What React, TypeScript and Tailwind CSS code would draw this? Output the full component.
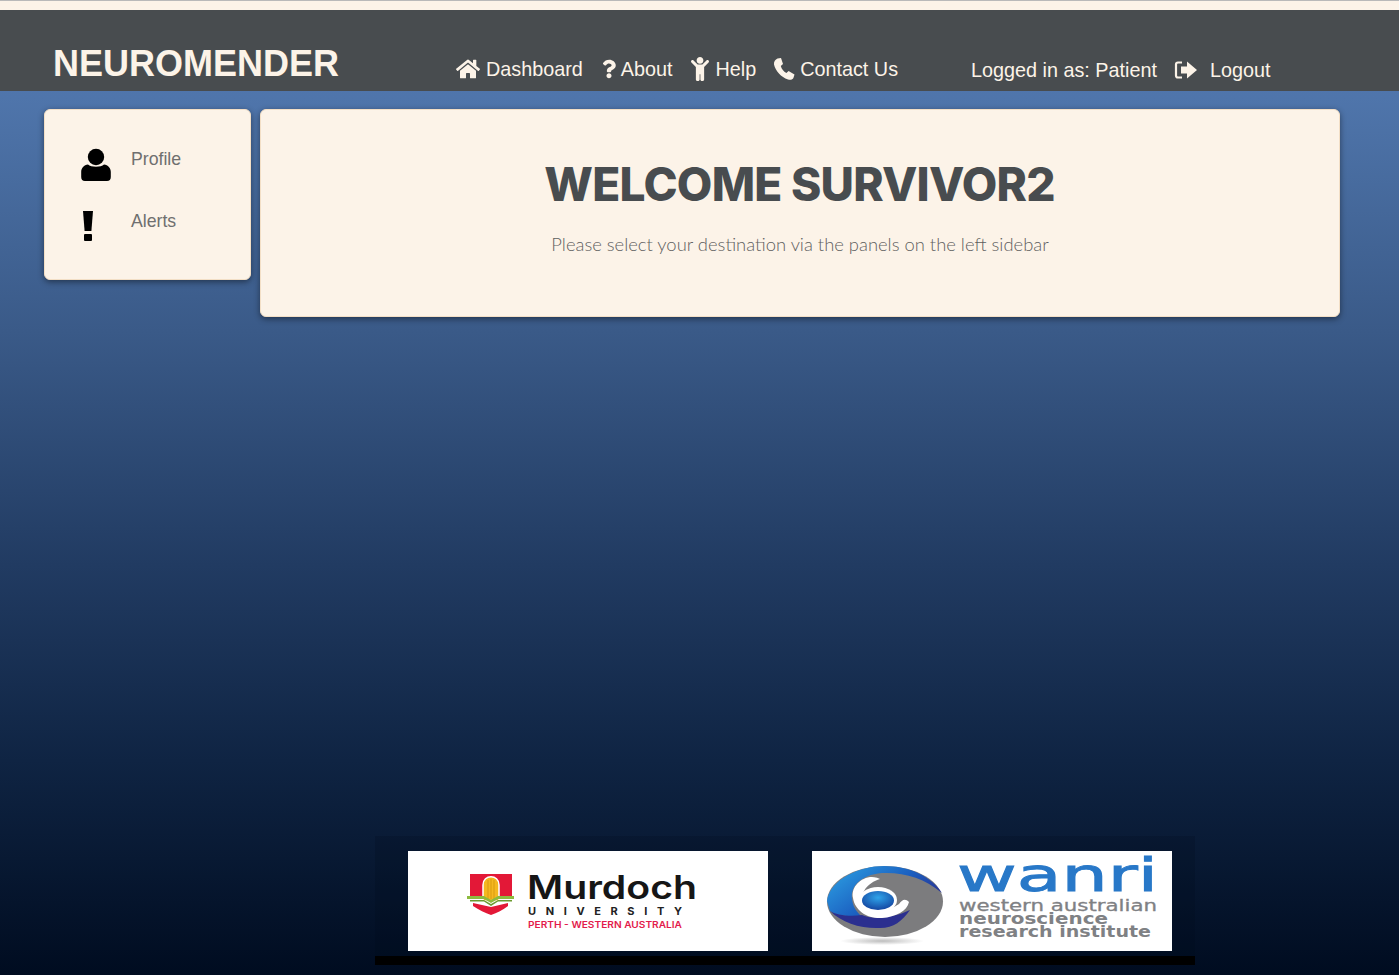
import { FaHome, FaQuestion, FaChild } from "react-icons/fa";

const sans = "font-['Liberation_Sans',Arial,sans-serif]";

function Phone() {
  return (
    <svg width="22" height="24" viewBox="0 0 22 24" className="shrink-0">
      <path d="M4.5 1.5 L8 1 L10 7 L7.8 9 C8.6 12 10.6 14.6 13.4 16 L15.6 14 L21.5 17.5 L20.4 21 C19.6 22.6 17.4 23.2 15 22.4 C8 20 2.6 14 1 7.4 C0.6 4.8 2.4 2.4 4.5 1.5 Z" fill="#fcf3e8" />
    </svg>
  );
}

function LogoutIcon() {
  return (
    <svg width="24" height="20" viewBox="0 0 24 20" className="shrink-0">
      <path d="M8 2.5 H4 Q2 2.5 2 4.5 V15.5 Q2 17.5 4 17.5 H8" fill="none" stroke="#fcf3e8" strokeWidth="2.2" />
      <path d="M7 6.5 H13 V1.5 L23 10 L13 18.5 V13.5 H7 Z" fill="#fcf3e8" />
    </svg>
  );
}

function UserIcon() {
  return (
    <svg width="32" height="34" viewBox="0 0 32 34" className="shrink-0">
      <circle cx="16" cy="9" r="8.2" fill="#000" />
      <path d="M8 16.5 C11 19.5 21 19.5 24 16.5 C28 17 30.8 20 30.8 24 V29 Q30.8 33 27 33 H5 Q1.2 33 1.2 29 V24 C1.2 20 4 17 8 16.5 Z" fill="#000" />
    </svg>
  );
}

function AlertIcon() {
  return (
    <svg width="12" height="32" viewBox="0 0 12 32" className="shrink-0">
      <path d="M1 1 H11 L9.4 21 H2.6 Z" fill="#000" />
      <rect x="2" y="24" width="8" height="7" rx="1" fill="#000" />
    </svg>
  );
}

function MurdochLogo() {
  return (
    <svg width="360" height="100" viewBox="0 0 360 100" className="block">
      <rect width="360" height="100" fill="#fff" />
      <path d="M62 23 H104 V45 H62 Z" fill="#e31837" />
      <path d="M65 52 L83 56 L100 52 V55 C95 59 89 62 83 64 C77 62 71 59 65 55 Z" fill="#e31837" />
      <path d="M75 50 V34 C75 23 91 23 91 34 V50 Z" fill="#f5b81f" stroke="#fff" strokeWidth="1.5" />
      <path d="M80 29 V48 M83 28 V48 M86 29 V48" stroke="#d99a10" strokeWidth="1" />
      <path d="M59 45 H76 L83 49 L90 45 H106 V48 H90 L83 52 L76 48 H59 Z" fill="#8dbb3f" />
      <path d="M62 49 H76 L83 53 L90 49 H104 V50.5 H90 L83 55 L76 50.5 H62 Z" fill="#6b9a2f" />
      <text x="119" y="48" fontFamily="Inter,sans-serif" fontWeight="600" fontSize="32" fill="#161616" textLength="170" lengthAdjust="spacingAndGlyphs">Murdoch</text>
      <text x="120" y="64" fontFamily="Inter,sans-serif" fontWeight="700" fontSize="11" fill="#222" textLength="154">UNIVERSITY</text>
      <text x="120" y="77" fontFamily="Inter,sans-serif" fontWeight="600" fontSize="9" fill="#e31b4c" textLength="154" lengthAdjust="spacingAndGlyphs">PERTH - WESTERN AUSTRALIA</text>
    </svg>
  );
}

function WanriLogo() {
  return (
    <svg width="360" height="100" viewBox="0 0 360 100" className="block">
      <defs>
        <linearGradient id="wb" x1="0" y1="0" x2="1" y2="0.6">
          <stop offset="0" stopColor="#2ea6e6" />
          <stop offset="0.6" stopColor="#1b5fc0" />
          <stop offset="1" stopColor="#2b2f8f" />
        </linearGradient>
        <radialGradient id="wc" cx="0.5" cy="0.35" r="0.7">
          <stop offset="0" stopColor="#2fa4ea" />
          <stop offset="1" stopColor="#123f9c" />
        </radialGradient>
        <radialGradient id="ws" cx="0.5" cy="0.5" r="0.5">
          <stop offset="0" stopColor="#bdbdbd" />
          <stop offset="1" stopColor="#ffffff" />
        </radialGradient>
      </defs>
      <rect width="360" height="100" fill="#fff" />
      <ellipse cx="70" cy="90" rx="42" ry="4" fill="url(#ws)" />
      <ellipse cx="73" cy="50.5" rx="58" ry="35.5" fill="#7c7c7e" />
      <path d="M15 50 C18 28 48 15 72 15 C98 15 120 26 130 42 C112 27 92 21 70 22 C48 24 38 36 40 48 C41 56 44 60 50 66 C38 66 24 64 18 60 Z" fill="url(#wb)" />
      <path d="M18 60 C24 64 38 66 50 64 C58 68 80 68 98 59 C90 70 82 77 68 77 C50 78 30 72 18 60 Z" fill="#2b2f8f" />
      <path d="M58 26 C46 28 39 38 41 47 C43 60 56 68 70 67 C84 66 95 60 97 51 C93 47 90 49 87 53 C80 58 70 60 62 58 C52 56 48 46 52 40 C56 33 62 30 68 28 C64 26 60 26 58 26 Z" fill="#fff" />
      <ellipse cx="66" cy="49" rx="19" ry="13" fill="#fff" />
      <ellipse cx="66" cy="49.5" rx="16" ry="9.5" fill="url(#wc)" />
      <text x="145" y="40" fontFamily="'DejaVu Sans',sans-serif" fontSize="47" fill="#2878c8" stroke="#2878c8" strokeWidth="0.9" textLength="201" lengthAdjust="spacingAndGlyphs">wanri</text>
      <text x="147" y="60" fontFamily="'DejaVu Sans',sans-serif" fontSize="15" fill="#7f8184" stroke="#7f8184" strokeWidth="0.3" textLength="198" lengthAdjust="spacingAndGlyphs">western australian</text>
      <text x="147" y="73" fontFamily="'DejaVu Sans',sans-serif" fontWeight="700" fontSize="15" fill="#7f8184" textLength="149" lengthAdjust="spacingAndGlyphs">neuroscience</text>
      <text x="147" y="86" fontFamily="'DejaVu Sans',sans-serif" fontWeight="700" fontSize="15" fill="#7f8184" textLength="192" lengthAdjust="spacingAndGlyphs">research institute</text>
    </svg>
  );
}

export default function App() {
  return (
    <div className={`${sans} flex h-[975px] flex-col overflow-hidden bg-[linear-gradient(180deg,#5579b3_0%,#4f75ab_10%,#3a5a88_34%,#213b62_58%,#0f2443_78%,#000c20_100%)]`}>
      <div className="h-[10px] shrink-0 border-t border-[#b9b9b9] bg-[#fcf3e8]" />
      <header className="flex h-[81px] shrink-0 items-end bg-[#484c4f] pl-[53px] text-[#fcf3e8]">
        <div className="mb-[7px] w-[403px] text-[36px] leading-[41px] font-bold">NEUROMENDER</div>
        <nav className="mb-[10px] flex items-center text-[19.8px] leading-[24px]">
          <FaHome className="h-[24px] w-[24px] shrink-0" />
          <span className="ml-[6px]">Dashboard</span>
          <FaQuestion className="ml-[19px] h-[20px] w-[14px] shrink-0" />
          <span className="ml-[5px]">About</span>
          <FaChild className="ml-[19px] h-[24px] w-[18px] shrink-0" />
          <span className="ml-[6px]">Help</span>
          <span className="ml-[17px]"><Phone /></span>
          <span className="ml-[5px]">Contact Us</span>
        </nav>
        <div className="mb-[9px] ml-[73px] flex items-center text-[19.8px] leading-[24px]">
          <span>Logged in as: Patient</span>
          <span className="ml-[17px]"><LogoutIcon /></span>
          <span className="ml-[12px]">Logout</span>
        </div>
      </header>

      <main className="mt-[18px] flex items-start pl-[44px]">
        <aside className="h-[171px] w-[207px] shrink-0 rounded-[6px] border border-[#f3dfc6] bg-[#fcf3e8] pt-[38px] pl-[35px] shadow-[0_2px_6px_rgba(0,0,0,0.45)]">
          <div className="flex h-[34px] items-start">
            <UserIcon />
            <span className="ml-[19px] text-[17.7px] leading-[22px] text-[#6f6f6f]">Profile</span>
          </div>
          <div className="mt-[28px] flex h-[34px] items-start">
            <span className="w-[32px] pl-[2px]"><AlertIcon /></span>
            <span className="ml-[19px] text-[17.7px] leading-[22px] text-[#6f6f6f]">Alerts</span>
          </div>
        </aside>
        <section className="ml-[9px] h-[208px] w-[1080px] shrink-0 rounded-[6px] border border-[#f3dfc6] bg-[#fcf3e8] pt-[46px] text-center shadow-[0_2px_6px_rgba(0,0,0,0.45)]">
          <h1 className="ml-[-1px] font-['Inter',sans-serif] text-[46px] leading-[56px] font-extrabold tracking-[-0.75px] text-[#484c4f]">WELCOME SURVIVOR2</h1>
          <p className="mt-[19px] font-['Lato',sans-serif] text-[18.4px] leading-[26px] font-light text-[#5f5f5f]">Please select your destination via the panels on the left sidebar</p>
        </section>
      </main>

      <footer className="mt-auto mb-[10px] ml-[375px] w-[820px] bg-[rgba(0,8,24,0.2)] pt-[15px]">
        <div className="flex pl-[33px]">
          <MurdochLogo />
          <div className="ml-[44px]"><WanriLogo /></div>
        </div>
        <div className="mt-[5px] h-[9px] bg-black" />
      </footer>
    </div>
  );
}
